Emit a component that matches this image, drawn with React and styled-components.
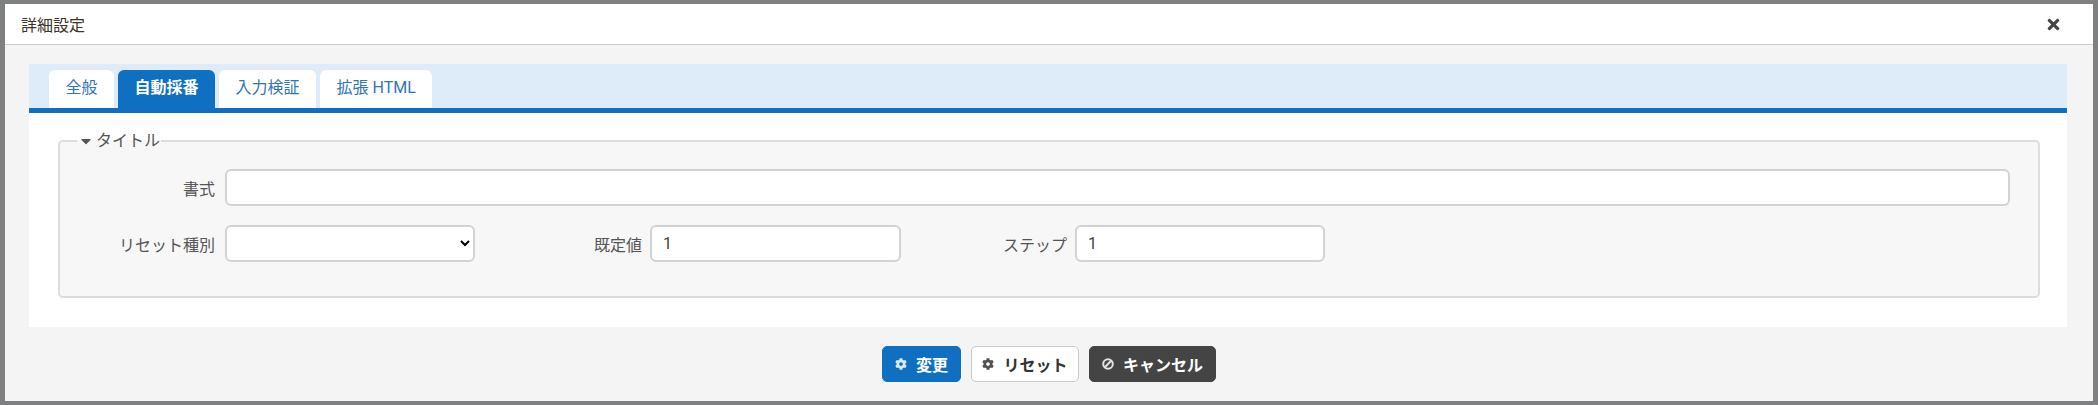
import styled, { createGlobalStyle } from "styled-components";
import { FaCaretDown, FaCog, FaTimes } from "react-icons/fa";

const GlobalStyle = createGlobalStyle`
    html, body {
        margin: 0;
        height: 405px;
        overflow: hidden;
        background: #7f8081;
    }
    body {
        font-family: "Roboto", "Noto Sans CJK JP", sans-serif;
        font-size: 16px;
        color: #444;
    }
`
const Dialog = styled.div`
    box-sizing: border-box;
    width: 2088px;
    height: 397px;
    margin: 4px 0 0 5px;
    background: #f4f4f4;
    display: flex;
    flex-direction: column;
`
const TitleBar = styled.div`
    box-sizing: border-box;
    height: 41px;
    padding: 0 31px 0 16px;
    background: #fff;
    border-bottom: 1px solid #ccc;
    display: flex;
    justify-content: space-between;
    align-items: center;
    color: #3d3428;
`
const CloseButton = styled.button`
    border: 0;
    padding: 0;
    background: none;
    color: #444;
    font-size: 17px;
    display: flex;
`
const Content = styled.div`
    margin: 19px 26px 0 24px;
`
const TabBar = styled.div`
    box-sizing: border-box;
    height: 49px;
    padding: 6px 0 0 20px;
    background: #deebf8;
    border-bottom: 5px solid #0f6fc0;
    display: flex;
    gap: 4px;
`
const Tab = styled.div`
    padding: 0 16.5px;
    border-radius: 6px 6px 0 0;
    background: ${p => p.$active ? "#0f6fc0" : "#fff"};
    color: ${p => p.$active ? "#fff" : "#2f75b5"};
    font-weight: ${p => p.$active ? 700 : 400};
    line-height: 36px;
`
const Panel = styled.div`
    box-sizing: border-box;
    height: 214px;
    padding: 16px 27px 0 29px;
    background: #fff;
`
const FieldSet = styled.fieldset`
    box-sizing: border-box;
    height: 169px;
    margin: 0;
    padding: 16px 0 0;
    background: #f7f7f7;
    border: 2px solid #ddd;
    border-radius: 5px;
    min-inline-size: 0;
`
const Legend = styled.legend`
    margin-left: 17px;
    padding: 0 1px;
    line-height: 24px;
    display: flex;
    align-items: center;
    gap: 2px;
    color: #555;
`
const Row = styled.div`
    display: flex;
    align-items: center;
    margin-bottom: 19px;
`
const Label = styled.label`
    width: ${p => p.$width}px;
    margin-right: ${p => p.$gap}px;
    text-align: right;
    color: #555;
    white-space: nowrap;
`
const Input = styled.input`
    box-sizing: border-box;
    width: ${p => p.$width}px;
    height: 37px;
    padding: 0 11px;
    background: #fff;
    border: 2px solid #d2d2d2;
    border-radius: 6px;
    font: inherit;
    color: #444;
`
const Select = styled.select`
    box-sizing: border-box;
    width: ${p => p.$width}px;
    height: 37px;
    padding: 0 8px;
    background: #fff;
    border: 2px solid #d2d2d2;
    border-radius: 6px;
    font: inherit;
    color: #000;
`
const Footer = styled.div`
    margin-top: 19px;
    display: flex;
    justify-content: center;
    gap: 10px;
`
const Button = styled.button`
    box-sizing: border-box;
    height: 36px;
    padding: 0 ${p => p.$pad}px;
    border-radius: 5px;
    font: inherit;
    font-weight: 700;
    display: flex;
    align-items: center;
    gap: 9px;
    background: ${p => p.$bg};
    color: ${p => p.$color};
    border: 1px solid ${p => p.$border};
    svg {
        width: 12px;
        height: 12px;
        opacity: 0.85;
    }
`

// slash runs bottom-left to top-right, unlike the icon packs' ban
function BanIcon() {
    return (
        <svg viewBox="0 0 12 12" fill="none" stroke="currentColor" strokeWidth="2">
            <circle cx="6" cy="6" r="4.8" />
            <path d="M2.8 9.2 9.2 2.8" />
        </svg>
    )
}

function App() {
    return (
        <>
            <GlobalStyle />
            <Dialog>
                <TitleBar>
                    <span>詳細設定</span>
                    <CloseButton><FaTimes /></CloseButton>
                </TitleBar>
                <Content>
                    <TabBar>
                        <Tab>全般</Tab>
                        <Tab $active>自動採番</Tab>
                        <Tab>入力検証</Tab>
                        <Tab>拡張 HTML</Tab>
                    </TabBar>
                    <Panel>
                        <FieldSet>
                            <Legend><FaCaretDown size={16} />タイトル</Legend>
                            <Row>
                                <Label $width={155} $gap={10}>書式</Label>
                                <Input $width={1785} />
                            </Row>
                            <Row>
                                <Label $width={155} $gap={10}>リセット種別</Label>
                                <Select $width={250}><option></option></Select>
                                <Label $width={167} $gap={8}>既定値</Label>
                                <Input $width={251} defaultValue="1" />
                                <Label $width={166} $gap={8}>ステップ</Label>
                                <Input $width={250} defaultValue="1" />
                            </Row>
                        </FieldSet>
                    </Panel>
                </Content>
                <Footer>
                    <Button $bg="#0f6fc0" $color="#fff" $border="#0f6fc0" $pad={12}><FaCog />変更</Button>
                    <Button $bg="#fff" $color="#333" $border="#ccc" $pad={10.5}><FaCog />リセット</Button>
                    <Button $bg="#444" $color="#fff" $border="#444" $pad={12}><BanIcon />キャンセル</Button>
                </Footer>
            </Dialog>
        </>
    )
}

export default App;
